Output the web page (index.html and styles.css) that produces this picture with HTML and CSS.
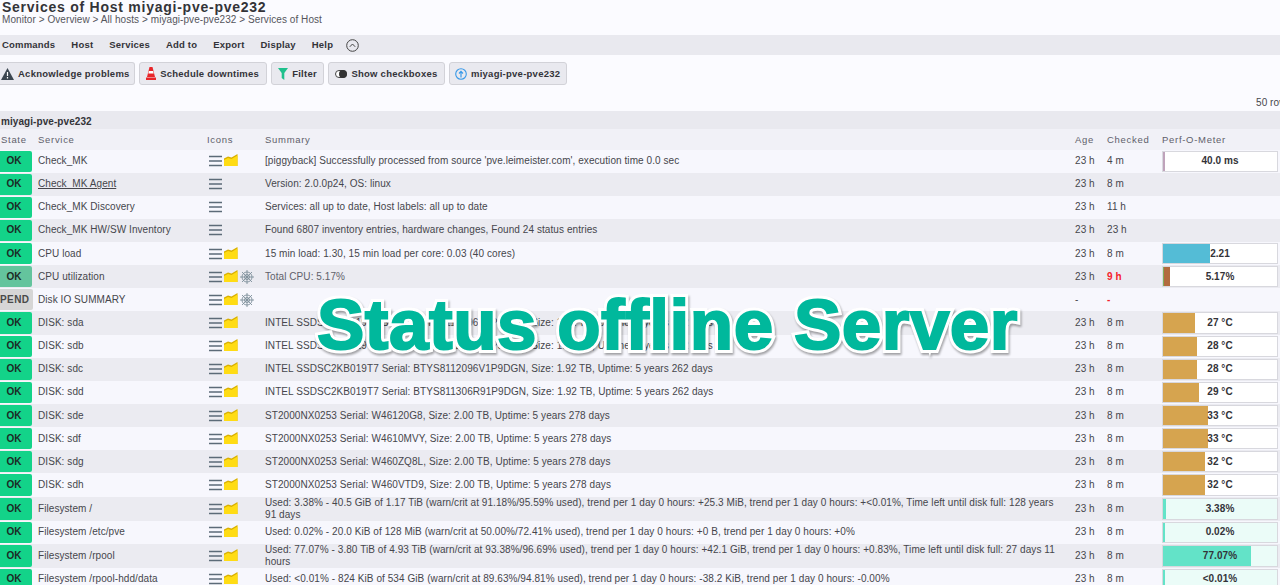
FILE: index.html
```html
<!DOCTYPE html>
<html lang="en">
<head>
<meta charset="utf-8">
<title>Services of Host</title>
<link rel="stylesheet" href="styles.css">
</head>
<body>
<svg class="defs" width="0" height="0" aria-hidden="true">
  <symbol id="menu" viewBox="0 0 13 12"><path d="M0 1.500h13M0 6h13M0 10.500h13" stroke="#5c6b78" stroke-width="1.500" fill="none"/></symbol>
  <symbol id="graph" viewBox="0 0 14 12"><path d="M0 12V4.500L4 2.500L7.500 3.500L13.500 0V12Z" fill="#d9b000"/><path d="M0 12V6L4 4L7.500 5L13.500 1.500V12Z" fill="#ffdc14"/></symbol>
  <symbol id="wheel" viewBox="0 0 14 14"><g stroke="#7d8f9a" stroke-width=".9" fill="none"><circle cx="7" cy="7" r="5"/><circle cx="7" cy="7" r="2.500"/><path d="M7 0v14M0 7h14M2 2l10 10M12 2L2 12"/></g></symbol>
</svg>
<header class="head">
  <h1 class="title">Services of Host miyagi-pve-pve232</h1>
  <div class="crumbs">Monitor &gt; Overview &gt; All hosts &gt; miyagi-pve-pve232 &gt; Services of Host</div>
</header>
<nav class="menubar">
  <span>Commands</span><span>Host</span><span>Services</span><span>Add to</span><span>Export</span><span>Display</span><span>Help</span>
  <svg class="collapse" width="13" height="13" viewBox="0 0 13 13"><circle cx="6.500" cy="6.500" r="5.800" fill="none" stroke="#444" stroke-width="1"/><path d="M3.800 7.800L6.500 5L9.200 7.800" fill="none" stroke="#444" stroke-width="1"/></svg>
</nav>
<div class="actions">
  <button class="btn btn-first"><svg width="13" height="12" viewBox="0 0 13 12"><path d="M6.500 0L13 12H0Z" fill="#3c4650"/><path d="M6.500 4v4M6.500 9v1.500" stroke="#fff" stroke-width="1.200"/></svg>Acknowledge problems</button>
  <button class="btn btn-wide"><svg width="10" height="13" viewBox="0 0 10 13"><path d="M3.500 0h3L9 10H1Z" fill="#e8262a"/><path d="M2.900 4h4.200l.6 2.500H2.300Z" fill="#fff"/><path d="M0 10.500h10V13H0Z" fill="#e8262a"/></svg>Schedule downtimes</button>
  <button class="btn btn-wide"><svg width="10" height="12" viewBox="0 0 10 12"><path d="M0 0h10L6.300 5V12L3.700 10V5Z" fill="#1ec08c"/></svg>Filter</button>
  <button class="btn"><svg width="12" height="8" viewBox="0 0 12 8"><rect x=".5" y=".5" width="11" height="7" rx="3.500" fill="#fff" stroke="#444"/><circle cx="8" cy="4" r="4" fill="#333"/></svg>Show checkboxes</button>
  <button class="btn btn-last"><svg width="12" height="12" viewBox="0 0 12 12"><circle cx="6" cy="6" r="5.300" fill="none" stroke="#3a9ae8" stroke-width="1.100"/><path d="M6 9.500V3.500M4 5.500L6 3.300L8 5.500" fill="none" stroke="#3a9ae8" stroke-width="1.200"/></svg>miyagi-pve-pve232</button>
</div>
<div class="rowcount">50 rows</div>
<table class="services">
  <thead>
    <tr class="group"><th colspan="7">miyagi-pve-pve232</th></tr>
    <tr class="cols"><th>State</th><th>Service</th><th>Icons</th><th>Summary</th><th>Age</th><th>Checked</th><th>Perf-O-Meter</th></tr>
  </thead>
  <tbody>
    <tr><td class="st"><b class="ok">OK</b></td><td>Check_MK</td><td class="ic"><svg class="i"><use href="#menu"/></svg><svg class="g"><use href="#graph"/></svg></td><td>[piggyback] Successfully processed from source 'pve.leimeister.com', execution time 0.0 sec</td><td>23 h</td><td>4 m</td><td class="pf"><div class="pm"><i class="f" style="width:2px;background:#bfa3bb"></i><span>40.0 ms</span></div></td></tr>
    <tr><td class="st"><b class="ok">OK</b></td><td><u>Check_MK Agent</u></td><td class="ic"><svg class="i"><use href="#menu"/></svg></td><td>Version: 2.0.0p24, OS: linux</td><td>23 h</td><td>8 m</td><td></td></tr>
    <tr><td class="st"><b class="ok">OK</b></td><td>Check_MK Discovery</td><td class="ic"><svg class="i"><use href="#menu"/></svg></td><td>Services: all up to date, Host labels: all up to date</td><td>23 h</td><td>11 h</td><td></td></tr>
    <tr><td class="st"><b class="ok">OK</b></td><td>Check_MK HW/SW Inventory</td><td class="ic"><svg class="i"><use href="#menu"/></svg></td><td>Found 6807 inventory entries, hardware changes, Found 24 status entries</td><td>23 h</td><td>23 h</td><td></td></tr>
    <tr><td class="st"><b class="ok">OK</b></td><td>CPU load</td><td class="ic"><svg class="i"><use href="#menu"/></svg><svg class="g"><use href="#graph"/></svg></td><td>15 min load: 1.30, 15 min load per core: 0.03 (40 cores)</td><td>23 h</td><td>8 m</td><td class="pf"><div class="pm"><i class="f" style="width:47px;background:#54bcd6"></i><span>2.21</span></div></td></tr>
    <tr><td class="st"><b class="ok stale">OK</b></td><td>CPU utilization</td><td class="ic"><svg class="i"><use href="#menu"/></svg><svg class="g"><use href="#graph"/></svg><svg class="w"><use href="#wheel"/></svg></td><td class="dim">Total CPU: 5.17%</td><td>23 h</td><td class="crit">9 h</td><td class="pf"><div class="pm"><i class="f" style="width:1px;background:#7fae5a"></i><i class="f" style="width:6px;background:#b26b3e"></i><span>5.17%</span></div></td></tr>
    <tr><td class="st"><b class="pend">PEND</b></td><td>Disk IO SUMMARY</td><td class="ic"><svg class="i"><use href="#menu"/></svg><svg class="g"><use href="#graph"/></svg><svg class="w"><use href="#wheel"/></svg></td><td></td><td>-</td><td class="crit">-</td><td></td></tr>
    <tr><td class="st"><b class="ok">OK</b></td><td>DISK: sda</td><td class="ic"><svg class="i"><use href="#menu"/></svg><svg class="g"><use href="#graph"/></svg></td><td>INTEL SSDSC2KB019T7 Serial: BTYS8112096V1P9DGN, Size: 1.92 TB, Uptime: 5 years 262 days</td><td>23 h</td><td>8 m</td><td class="pf"><div class="pm"><i class="f t" style="width:32px"></i><span>27 °C</span></div></td></tr>
    <tr><td class="st"><b class="ok">OK</b></td><td>DISK: sdb</td><td class="ic"><svg class="i"><use href="#menu"/></svg><svg class="g"><use href="#graph"/></svg></td><td>INTEL SSDSC2KB019T7 Serial: BTYS8112096V1P9DGN, Size: 1.92 TB, Uptime: 5 years 262 days</td><td>23 h</td><td>8 m</td><td class="pf"><div class="pm"><i class="f t" style="width:34px"></i><span>28 °C</span></div></td></tr>
    <tr><td class="st"><b class="ok">OK</b></td><td>DISK: sdc</td><td class="ic"><svg class="i"><use href="#menu"/></svg><svg class="g"><use href="#graph"/></svg></td><td>INTEL SSDSC2KB019T7 Serial: BTYS8112096V1P9DGN, Size: 1.92 TB, Uptime: 5 years 262 days</td><td>23 h</td><td>8 m</td><td class="pf"><div class="pm"><i class="f t" style="width:34px"></i><span>28 °C</span></div></td></tr>
    <tr><td class="st"><b class="ok">OK</b></td><td>DISK: sdd</td><td class="ic"><svg class="i"><use href="#menu"/></svg><svg class="g"><use href="#graph"/></svg></td><td>INTEL SSDSC2KB019T7 Serial: BTYS811306R91P9DGN, Size: 1.92 TB, Uptime: 5 years 262 days</td><td>23 h</td><td>8 m</td><td class="pf"><div class="pm"><i class="f t" style="width:36px"></i><span>29 °C</span></div></td></tr>
    <tr><td class="st"><b class="ok">OK</b></td><td>DISK: sde</td><td class="ic"><svg class="i"><use href="#menu"/></svg><svg class="g"><use href="#graph"/></svg></td><td>ST2000NX0253 Serial: W46120G8, Size: 2.00 TB, Uptime: 5 years 278 days</td><td>23 h</td><td>8 m</td><td class="pf"><div class="pm"><i class="f t" style="width:45px"></i><span>33 °C</span></div></td></tr>
    <tr><td class="st"><b class="ok">OK</b></td><td>DISK: sdf</td><td class="ic"><svg class="i"><use href="#menu"/></svg><svg class="g"><use href="#graph"/></svg></td><td>ST2000NX0253 Serial: W4610MVY, Size: 2.00 TB, Uptime: 5 years 278 days</td><td>23 h</td><td>8 m</td><td class="pf"><div class="pm"><i class="f t" style="width:45px"></i><span>33 °C</span></div></td></tr>
    <tr><td class="st"><b class="ok">OK</b></td><td>DISK: sdg</td><td class="ic"><svg class="i"><use href="#menu"/></svg><svg class="g"><use href="#graph"/></svg></td><td>ST2000NX0253 Serial: W460ZQ8L, Size: 2.00 TB, Uptime: 5 years 278 days</td><td>23 h</td><td>8 m</td><td class="pf"><div class="pm"><i class="f t" style="width:42px"></i><span>32 °C</span></div></td></tr>
    <tr><td class="st"><b class="ok">OK</b></td><td>DISK: sdh</td><td class="ic"><svg class="i"><use href="#menu"/></svg><svg class="g"><use href="#graph"/></svg></td><td>ST2000NX0253 Serial: W460VTD9, Size: 2.00 TB, Uptime: 5 years 278 days</td><td>23 h</td><td>8 m</td><td class="pf"><div class="pm"><i class="f t" style="width:42px"></i><span>32 °C</span></div></td></tr>
    <tr class="tall"><td class="st"><b class="ok">OK</b></td><td>Filesystem /</td><td class="ic"><svg class="i"><use href="#menu"/></svg><svg class="g"><use href="#graph"/></svg></td><td>Used: 3.38% - 40.5 GiB of 1.17 TiB (warn/crit at 91.18%/95.59% used), trend per 1 day 0 hours: +25.3 MiB, trend per 1 day 0 hours: +&lt;0.01%, Time left until disk full: 128 years 91 days</td><td>23 h</td><td>8 m</td><td class="pf"><div class="pm fs"><i class="f m" style="width:3px"></i><span>3.38%</span></div></td></tr>
    <tr><td class="st"><b class="ok">OK</b></td><td>Filesystem /etc/pve</td><td class="ic"><svg class="i"><use href="#menu"/></svg><svg class="g"><use href="#graph"/></svg></td><td>Used: 0.02% - 20.0 KiB of 128 MiB (warn/crit at 50.00%/72.41% used), trend per 1 day 0 hours: +0 B, trend per 1 day 0 hours: +0%</td><td>23 h</td><td>8 m</td><td class="pf"><div class="pm fs"><i class="f m" style="width:2px"></i><span>0.02%</span></div></td></tr>
    <tr class="tall"><td class="st"><b class="ok">OK</b></td><td>Filesystem /rpool</td><td class="ic"><svg class="i"><use href="#menu"/></svg><svg class="g"><use href="#graph"/></svg></td><td>Used: 77.07% - 3.80 TiB of 4.93 TiB (warn/crit at 93.38%/96.69% used), trend per 1 day 0 hours: +42.1 GiB, trend per 1 day 0 hours: +0.83%, Time left until disk full: 27 days 11 hours</td><td>23 h</td><td>8 m</td><td class="pf"><div class="pm fs"><i class="f m" style="width:88px"></i><span>77.07%</span></div></td></tr>
    <tr><td class="st"><b class="ok">OK</b></td><td>Filesystem /rpool-hdd/data</td><td class="ic"><svg class="i"><use href="#menu"/></svg><svg class="g"><use href="#graph"/></svg></td><td>Used: &lt;0.01% - 824 KiB of 534 GiB (warn/crit at 89.63%/94.81% used), trend per 1 day 0 hours: -38.2 KiB, trend per 1 day 0 hours: -0.00%</td><td>23 h</td><td>8 m</td><td class="pf"><div class="pm fs"><i class="f m" style="width:2px"></i><span>&lt;0.01%</span></div></td></tr>
  </tbody>
</table>
<div class="banner">Status offline Server</div>
</body>
</html>
```
FILE: styles.css
```css
html, body { margin: 0; padding: 0; height: 585px; overflow: hidden; }
body { background: #fbfbff; color: #46464c; font: 10px/12px "Liberation Sans", Arial, sans-serif; letter-spacing: .07px; position: relative; }
.defs { position: absolute; }
.head { height: 35px; padding-left: 2px; box-sizing: border-box; }
.title { margin: 0; font-size: 14px; line-height: 14px; font-weight: bold; letter-spacing: .75px; color: #333338; }
.crumbs { line-height: 12px; color: #55555c; }
.menubar { height: 20px; background: #e9e9ef; display: flex; align-items: center; gap: 16px; padding-left: 2px; font-size: 9.5px; letter-spacing: .2px; font-weight: bold; color: #333338; }
.collapse { margin-left: -3px; }
.actions { display: flex; gap: 4px; padding-top: 7px; height: 23px; }
.btn { display: flex; align-items: center; gap: 4px; height: 23px; box-sizing: border-box; padding: 0 6px; background: #e9e9ef; border: 1px solid #d2d2d8; border-radius: 3px; font: bold 9.5px "Liberation Sans", Arial, sans-serif; letter-spacing: .25px; color: #333338; }
.btn-first { padding: 0 4px 0 1px; border-left: 0; border-radius: 0 3px 3px 0; }
.btn-wide { padding: 0 6.5px; }
.btn-last { padding: 0 5.5px; }
.rowcount { height: 26px; white-space: nowrap; padding: 12px 0 0 1256px; box-sizing: border-box; }
.services { display: block; width: 1280px; border-spacing: 0; }
.services thead, .services tbody { display: block; }
.services tr { display: grid; grid-template-columns: 32px 169px 58px 810px 32px 61px 118px; height: 23.15px; }
.services tr.tall { height: 24px; }
.services tr.group { display: block; height: 18px; background: #e9e9ef; }
.services tr.cols { height: 20.5px; background: #f1f1f7; }
.services th { display: block; text-align: left; font-weight: normal; padding: 0 6px; color: #60606a; }
.group th { padding: 4.5px 0 0 1px; font-weight: bold; color: #333338; }
.cols th { padding-top: 5px; font-size: 9.5px; letter-spacing: .7px; }
.cols th:first-child { padding-left: 1px; }
.cols th:last-child { padding-left: 0; }
.services td { display: flex; align-items: center; padding: 0 6px; box-sizing: border-box; }
.services tbody tr:nth-child(odd) { background: #f7f7fd; }
.services tbody tr:nth-child(even) { background: #ebebf1; }
.services td.st { padding: 1px 0; align-items: stretch; }
.st b { flex: 1; display: flex; align-items: center; justify-content: center; padding-right: 4px; border-radius: 0 2px 2px 0; font-weight: bold; color: #1c2a26; }
.ok { background: #13d389; }
.stale { background: #64c49d; }
.st .pend { background: #d6d6d6; color: #4a4a4a; letter-spacing: .4px; }
.services td.ic { padding-left: 8px; padding-right: 0; }
.i { width: 13px; height: 12px; flex: none; }
.g { width: 14px; height: 12px; margin-left: 2px; margin-top: -2px; flex: none; }
.w { width: 14px; height: 14px; margin-left: 2px; flex: none; }
.dim { color: #60606a; }
.crit { color: #f5222d; font-weight: bold; }
.services td.pf { padding: 1px 2px 1px 0; align-items: stretch; }
.pm { flex: 1; display: flex; box-sizing: border-box; border: 1px solid #d8d8de; background: #fff; position: relative; }
.pm.fs { background: #ebfcf8; }
.f { display: block; }
.t { background: #d6a44f; }
.m { background: #63e3c8; }
.pm span { position: absolute; inset: 0; display: flex; align-items: center; justify-content: center; font-size: 10px; font-weight: bold; color: #333338; }
.banner { position: absolute; left: 317px; top: 282px; z-index: 0; font: bold 71px/86px "Liberation Sans", Arial, sans-serif; letter-spacing: .5px; white-space: nowrap; color: #00b89c; -webkit-text-stroke: 2px #00b89c; filter: drop-shadow(1px 2px 1px rgba(0,0,0,.35)); }
.banner::before { content: "Status offline Server"; position: absolute; left: 0; top: 0; z-index: -1; -webkit-text-stroke: 8px #fff; color: #fff; }
```
